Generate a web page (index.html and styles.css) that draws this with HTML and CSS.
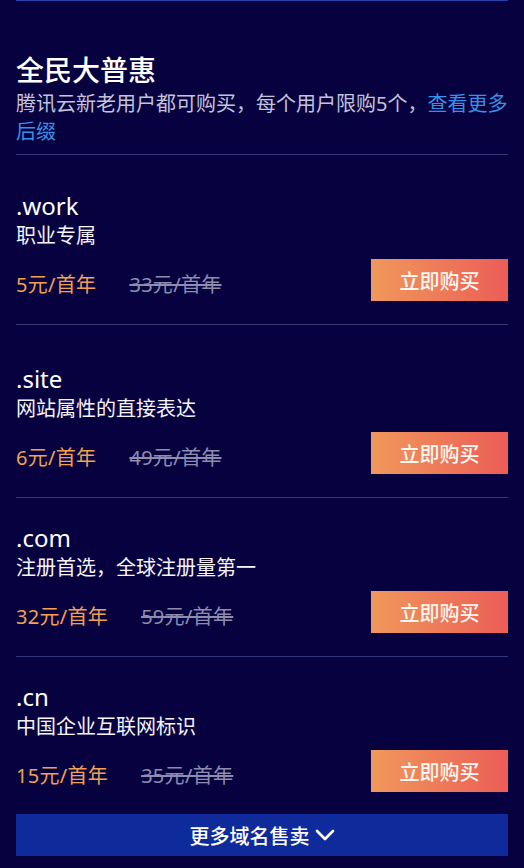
FILE: index.html
```html
<!DOCTYPE html>
<html lang="zh-CN">
<head>
<meta charset="utf-8">
<title>全民大普惠</title>
<link rel="stylesheet" href="styles.css">
</head>
<body>
<div class="page">
  <div class="topbar"></div>
  <header class="header">
    <h1 class="title">全民大普惠</h1>
    <p class="subtitle">腾讯云新老用户都可购买，每个用户限购5个，<a class="link" href="#">查看更多后缀</a></p>
  </header>
  <ul class="list">
    <li class="item item--work">
      <div class="name">.work</div>
      <div class="desc">职业专属</div>
      <div class="row">
        <div class="prices"><span class="price">5元/首年</span><span class="old">33元/首年</span></div>
        <button class="buy">立即购买</button>
      </div>
    </li>
    <li class="item item--site">
      <div class="name">.site</div>
      <div class="desc">网站属性的直接表达</div>
      <div class="row">
        <div class="prices"><span class="price">6元/首年</span><span class="old">49元/首年</span></div>
        <button class="buy">立即购买</button>
      </div>
    </li>
    <li class="item">
      <div class="name">.com</div>
      <div class="desc">注册首选，全球注册量第一</div>
      <div class="row">
        <div class="prices"><span class="price">32元/首年</span><span class="old">59元/首年</span></div>
        <button class="buy">立即购买</button>
      </div>
    </li>
    <li class="item">
      <div class="name">.cn</div>
      <div class="desc">中国企业互联网标识</div>
      <div class="row">
        <div class="prices"><span class="price">15元/首年</span><span class="old">35元/首年</span></div>
        <button class="buy">立即购买</button>
      </div>
    </li>
  </ul>
  <button class="more">更多域名售卖<svg class="chev" viewBox="0 0 20 12" width="20" height="12"><polyline points="2,2 10,10 18,2" fill="none" stroke="#fff" stroke-width="2.6" stroke-linecap="round" stroke-linejoin="round"/></svg></button>
</div>
</body>
</html>
```

FILE: styles.css
```css
* { box-sizing: border-box; }
html, body {
  margin: 0;
  padding: 0;
  background: #07023f;
}
body {
  font-family: "Noto Sans", "Noto Sans CJK SC", sans-serif;
  color: #ffffff;
}
.page {
  padding: 0 16px 12px;
}
.topbar {
  height: 1px;
  background: #2443a8;
}
.header {
  margin-top: 51px;
  padding-bottom: 8px;
  border-bottom: 1px solid #36367a;
}
.title {
  margin: 0 0 2px;
  font-size: 28px;
  line-height: 36px;
  font-weight: 500;
  color: #ffffff;
}
.subtitle {
  margin: 0;
  font-size: 20px;
  line-height: 28px;
  color: #c3c3dc;
}
.link {
  color: #3a8fe8;
  text-decoration: none;
}
.list {
  list-style: none;
  margin: 0;
  padding: 0;
}
.item {
  padding: 24px 0 23px;
  border-bottom: 1px solid #36367a;
}
.item:last-child {
  padding-bottom: 22px;
  border-bottom: none;
}
.item--work { padding-top: 35px; }
.item--site { padding-top: 38px; }
.name {
  font-size: 24px;
  line-height: 32px;
  color: #ffffff;
}
.desc {
  font-size: 20px;
  line-height: 28px;
  color: #f4f4fa;
}
.row {
  margin-top: 9px;
  display: flex;
  justify-content: space-between;
  align-items: flex-end;
}
.prices {
  display: flex;
  gap: 33px;
  font-size: 20px;
  line-height: 32px;
  letter-spacing: 0.3px;
}
.price {
  color: #f0a153;
}
.old {
  color: #8d8db0;
  text-decoration: line-through;
}
.buy {
  width: 137px;
  height: 42px;
  border: none;
  padding: 0;
  background: linear-gradient(to right, #f0985b, #ec5d57);
  color: #fff8f0;
  font-family: "Noto Sans CJK SC", sans-serif;
  font-size: 20px;
  font-weight: 500;
}
.more {
  display: flex;
  align-items: center;
  justify-content: center;
  gap: 5px;
  width: 100%;
  height: 42px;
  border: none;
  padding: 0;
  background: #0e2a9b;
  color: #ffffff;
  font-family: "Noto Sans CJK SC", sans-serif;
  font-size: 20px;
  font-weight: 500;
}
.chev {
  display: block;
}
```
